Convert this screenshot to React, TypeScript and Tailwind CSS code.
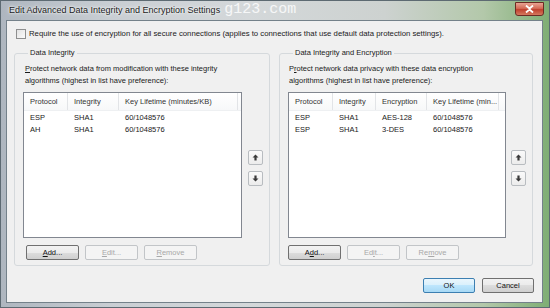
import React from "react";

function Btn({
  children,
  disabled,
  focused,
  w = "w-[53px]",
}: {
  children: React.ReactNode;
  disabled?: boolean;
  focused?: boolean;
  w?: string;
}) {
  const cls = disabled
    ? "border-[#c2c5c8] bg-[#f4f4f4] text-[#a8a8a8]"
    : focused
    ? "border-[#3c7fb1] bg-[linear-gradient(#eaf6fd_0%,#d9f0fc_50%,#bee6fd_50%,#a7d9f5_100%)] text-[#111]"
    : "border-[#707070] bg-[linear-gradient(#f2f2f2_0%,#ebebeb_50%,#dddddd_50%,#cfcfcf_100%)] text-[#111]";
  return (
    <div
      className={`h-[15px] ${w} rounded-[2px] border flex items-center justify-center text-[7.5px] leading-none ${cls}`}
    >
      {children}
    </div>
  );
}

function Arrow({ down }: { down?: boolean }) {
  return (
    <div className="w-[15px] h-[15px] rounded-[2px] border border-[#b8bcc0] bg-[linear-gradient(#fafafa,#ececec)] flex items-center justify-center">
      <svg width="7" height="7" viewBox="0 0 7 7" className={down ? "rotate-180" : ""}>
        <path d="M3.5 0.5 L6.5 3.5 H4.6 V6.5 H2.4 V3.5 H0.5 Z" fill="#3a3a3a" />
      </svg>
    </div>
  );
}

type Col = { label: string; w: string };

function ListView({
  cols,
  rows,
  w,
}: {
  cols: Col[];
  rows: string[][];
  w: string;
}) {
  return (
    <div className={`${w} h-[146px] border border-[#828790] bg-white flex flex-col`}>
      <div className="h-[18px] flex items-center border-b border-[#eef0f2] bg-[linear-gradient(#ffffff,#f7f8f9)]">
        {cols.map((c, i) => (
          <div
            key={i}
            className={`${c.w} h-full flex items-center pl-[6px] border-r border-[#e2e4e7] text-[7.5px] text-[#333] whitespace-nowrap overflow-hidden`}
          >
            {c.label}
          </div>
        ))}
      </div>
      <div className="pt-[1px]">
        {rows.map((r, i) => (
          <div key={i} className="h-[12px] flex items-center">
            {r.map((cell, j) => (
              <div key={j} className={`${cols[j].w} pl-[6px] text-[7.5px] text-[#1a1a1a] whitespace-nowrap`}>
                {cell}
              </div>
            ))}
          </div>
        ))}
      </div>
    </div>
  );
}

function Group({
  title,
  w,
  children,
}: {
  title: string;
  w: string;
  children: React.ReactNode;
}) {
  return (
    <fieldset className={`${w} h-[219px] border border-[#d5d9dc] rounded-[3px] pl-[8px] pr-[6px] pt-[4px] pb-[6px] flex flex-col`}>
      <legend className="ml-[5px] px-[2px] text-[7.5px] leading-[12px] text-[#1a1a1a]">{title}</legend>
      {children}
    </fieldset>
  );
}

export default function App() {
  const leftCols: Col[] = [
    { label: "Protocol", w: "w-[44px]" },
    { label: "Integrity", w: "w-[51px]" },
    { label: "Key Lifetime (minutes/KB)", w: "w-[119px]" },
  ];
  const rightCols: Col[] = [
    { label: "Protocol", w: "w-[44px]" },
    { label: "Integrity", w: "w-[43px]" },
    { label: "Encryption", w: "w-[51px]" },
    { label: "Key Lifetime (min...", w: "w-[72px]" },
  ];
  return (
    <div className="w-[550px] h-[308px] overflow-hidden flex flex-col font-['Liberation_Sans',Arial,sans-serif] bg-[linear-gradient(90deg,#aeb6bf_0%,#c9ced3_20%,#d4d8da_45%,#cdd2d0_70%,#b3c8aa_88%,#7fae74_100%)] border border-[#5d6a72]">
      {/* Title bar */}
      <div className="h-[19px] flex items-start relative">
        <div className="pl-[8px] pt-[3px] text-[9px] leading-[12px] text-[#1b1b1b] [text-shadow:0_0_4px_#ffffff,0_0_2px_#ffffff] whitespace-nowrap">
          Edit Advanced Data Integrity and Encryption Settings
        </div>
        <div className="pl-[4px] pt-[1px] text-[15px] leading-[16px] font-['Liberation_Mono',monospace] text-white/80 whitespace-nowrap">
          g123.com
        </div>
        <div className="flex-1" />
        <div className="mr-[5px] mt-[1px] w-[29px] h-[14px] rounded-b-[3px] border border-[#6d2b24] bg-[linear-gradient(#e8a493_0%,#d46a56_45%,#c0412e_55%,#d47a5e_100%)] flex items-center justify-center">
          <svg width="9" height="8" viewBox="0 0 9 8">
            <path d="M1 0.5 L4.5 3.5 L8 0.5 M1 7.5 L4.5 4.5 L8 7.5" stroke="#ffffff" strokeWidth="1.8" fill="none" />
          </svg>
        </div>
      </div>

      {/* Client area */}
      <div className="ml-[5px] mr-[6px] h-[283px] bg-[#f0f0f0] border border-[#74818a] flex flex-col">
        <div className="mt-[8px] pl-[9px] h-[10px] flex items-center gap-[3px]">
          <div className="w-[10px] h-[10px] border border-[#8e8f8f] bg-[linear-gradient(135deg,#e2e2e2,#fbfbfb)]" />
          <div className="text-[7.75px] leading-none text-[#1a1a1a] whitespace-nowrap">
            Require the use of encryption for all secure connections (applies to connections that use default data protection settings).
          </div>
        </div>

        <div className="mt-[8px] pl-[7px] flex gap-[9px]">
          <Group title="Data Integrity" w="w-[256px]">
            <div className="ml-[2px] text-[7.5px] leading-[12px] text-[#1a1a1a]">
              <span className="underline">P</span>rotect network data from modification with these integrity
              <br />
              algorithms (highest in list have preference):
            </div>
            <div className="mt-[5px] flex gap-[6px]">
              <ListView
                w="w-[219px]"
                cols={leftCols}
                rows={[
                  ["ESP", "SHA1", "60/1048576"],
                  ["AH", "SHA1", "60/1048576"],
                ]}
              />
              <div className="pt-[58px] flex flex-col gap-[6px]">
                <Arrow />
                <Arrow down />
              </div>
            </div>
            <div className="mt-[7px] ml-[3px] flex gap-[6px]">
              <Btn>
                <span className="underline">A</span>dd...
              </Btn>
              <Btn disabled>
                <span className="underline">E</span>dit...
              </Btn>
              <Btn disabled>
                <span className="underline">R</span>emove
              </Btn>
            </div>
          </Group>

          <Group title="Data Integrity and Encryption" w="w-[254px]">
            <div className="ml-[1px] text-[7.5px] leading-[12px] text-[#1a1a1a]">
              P<span className="underline">r</span>otect network data privacy with these data encryption
              <br />
              algorithms (highest in list have preference):
            </div>
            <div className="mt-[5px] flex gap-[5px]">
              <ListView
                w="w-[218px]"
                cols={rightCols}
                rows={[
                  ["ESP", "SHA1", "AES-128", "60/1048576"],
                  ["ESP", "SHA1", "3-DES", "60/1048576"],
                ]}
              />
              <div className="pt-[58px] flex flex-col gap-[6px]">
                <Arrow />
                <Arrow down />
              </div>
            </div>
            <div className="mt-[7px] flex gap-[6px]">
              <Btn>
                A<span className="underline">d</span>d...
              </Btn>
              <Btn disabled>
                Ed<span className="underline">i</span>t...
              </Btn>
              <Btn disabled>
                Re<span className="underline">m</span>ove
              </Btn>
            </div>
          </Group>
        </div>

        <div className="mt-[12px] pr-[8px] flex justify-end gap-[7px]">
          <Btn focused w="w-[52px]">OK</Btn>
          <Btn w="w-[52px]">Cancel</Btn>
        </div>
      </div>
    </div>
  );
}
